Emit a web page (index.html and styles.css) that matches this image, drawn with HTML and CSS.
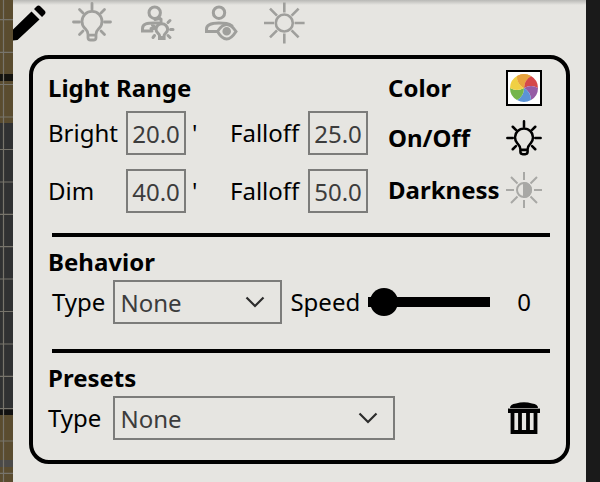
FILE: index.html
```html
<!DOCTYPE html>
<html lang="en">
<head>
    <meta charset="UTF-8">
    <meta name="viewport" content="width=device-width, initial-scale=1.0">
    <title>Light Settings</title>
    <link rel="stylesheet" href="styles.css">
</head>
<body>

    <!-- Shared icons -->
    <svg width="0" height="0" class="sprite" aria-hidden="true">
        <symbol id="icon-bulb" viewBox="0 0 40 40">
            <g fill="none" stroke="currentColor" stroke-width="2.8" stroke-linecap="round">
                <path d="M16 32.500c0-3.600-1.200-4.200-3.200-6.200a10 10 0 1 1 14.400 0c-2 2-3.200 2.600-3.200 6.200v2.900q0 2.600-2.600 2.600h-2.800q-2.600 0-2.600-2.600zM16 33.200h8"/>
                <path d="M20 1.500v6M1.500 20h6M32.500 20h6M7.500 7.500l3.500 3.500M32.500 7.500L29 11M7.500 32.500L11 29M32.500 32.500L29 29"/>
            </g>
        </symbol>
        <symbol id="icon-chevron" viewBox="0 0 20 12">
            <path d="M1.500 1.500L10 10l8.500-8.500" fill="none" stroke="currentColor" stroke-width="2.200"/>
        </symbol>
    </svg>

    <div class="screen">
        <svg class="map" viewBox="0 0 13 482" preserveAspectRatio="none" aria-hidden="true">
            <rect width="13" height="482" fill="#5a4c2f"/>
            <rect y="74" width="13" height="7" fill="#14130f"/>
            <rect y="123" width="13" height="286" fill="#303132"/>
            <rect y="409" width="13" height="6" fill="#111"/>
            <rect y="460" width="13" height="7" fill="#4b4a48"/>
            <path d="M3.500 0v482M0 19.700h13M0 52.300h13M0 84.500h13M0 117h13M0 149.500h13M0 182h13M0 214.300h13M0 246.700h13M0 279h13M0 311.500h13M0 344h13M0 376.300h13M0 408.700h13M0 441h13M0 473.300h13" stroke="#77746b" stroke-width="1.200" fill="none"/>
        </svg>

        <main class="panel">
            <nav class="toolbar">
                <button class="tool active" aria-label="Edit">
                    <svg viewBox="0 0 40 40">
                        <path d="M1 31.500L23.500 9.500l8 8L9.500 38l-5 .5-4-3z M26 7l2.500-2.500q2-2 4 0l4 4q2 2 0 4L34 15z" fill="currentColor"/>
                    </svg>
                </button>
                <button class="tool" aria-label="Light">
                    <svg><use href="#icon-bulb"/></svg>
                </button>
                <button class="tool" aria-label="Token light">
                    <svg viewBox="0 0 40 40" fill="none" stroke="currentColor" stroke-width="3" stroke-linecap="round">
                        <circle cx="18.700" cy="10.700" r="5.700"/>
                        <path d="M16 29H6.500v-2.500c0-5 5-5.500 12-5.500h4M15 26.500h3M18.500 24.500l-2-1M25 17v3M19 17.500l5-1"/>
                        <path d="M23.500 33.500c0-2-3.500-2.500-3.500-6a5.800 5.800 0 0 1 11.600 0c0 3.500-3.500 4-3.500 6v3h-4.600z"/>
                        <path d="M34.500 27.500h2.500M32 20.500l2-2M32 33.500l2 2M18.500 33.500l-1.500 2"/>
                        <path d="M24 34h4v3h-4z" fill="currentColor" stroke="none"/>
                    </svg>
                </button>
                <button class="tool" aria-label="Token vision">
                    <svg viewBox="0 0 40 40" fill="none" stroke="currentColor" stroke-width="3" stroke-linecap="round">
                        <circle cx="19" cy="10.700" r="5.700"/>
                        <path d="M17 29.500H6.500v-2.500c0-5 5-6 12.500-6 6 0 9.500 0 13 3"/>
                        <path d="M17.500 29.500q9-14 18.500 0q-9.500 15-18.500 0z"/>
                        <circle cx="26.700" cy="29.300" r="2.800" fill="currentColor"/>
                    </svg>
                </button>
                <button class="tool" aria-label="Daylight">
                    <svg viewBox="0 0 40 40" fill="none" stroke="currentColor" stroke-width="2.600">
                        <circle cx="20.300" cy="21" r="8.500"/>
                        <path d="M20.300 0.500v10M20.300 31.500v10M0 21h10M30.600 21h10M6 6.700l7 7M34.600 6.700l-7 7M6 35.300l7-7M34.600 35.300l-7-7"/>
                    </svg>
                </button>
            </nav>

            <div class="card">
                <section class="light">
                    <div class="ranges">
                        <h2>Light Range</h2>
                        <div class="range-row">
                            <label for="bright">Bright</label>
                            <input type="text" id="bright" value="20.0">
                            <span class="unit">'</span>
                            <label for="bright-falloff">Falloff</label>
                            <input type="text" id="bright-falloff" value="25.0">
                        </div>
                        <div class="range-row">
                            <label for="dim">Dim</label>
                            <input type="text" id="dim" value="40.0">
                            <span class="unit">'</span>
                            <label for="dim-falloff">Falloff</label>
                            <input type="text" id="dim-falloff" value="50.0">
                        </div>
                    </div>

                    <div class="options">
                        <h2>Color</h2>
                        <button class="color-button" aria-label="Color">
                            <svg viewBox="2 2 32 32">
                                <path d="M18 18A14 14 0 0 1 11 5.900A14 14 0 0 1 25 5.900A14 14 0 0 0 18 18z" fill="#e8a33d"/>
                                <path d="M18 18A14 14 0 0 1 25 5.900A14 14 0 0 1 32 18A14 14 0 0 0 18 18z" fill="#d5484a"/>
                                <path d="M18 18A14 14 0 0 1 32 18A14 14 0 0 1 25 30.100A14 14 0 0 0 18 18z" fill="#955ba5"/>
                                <path d="M18 18A14 14 0 0 1 25 30.100A14 14 0 0 1 11 30.100A14 14 0 0 0 18 18z" fill="#5b93d6"/>
                                <path d="M18 18A14 14 0 0 1 11 30.100A14 14 0 0 1 4 18A14 14 0 0 0 18 18z" fill="#74b54a"/>
                                <path d="M18 18A14 14 0 0 1 4 18A14 14 0 0 1 11 5.900A14 14 0 0 0 18 18z" fill="#f0d044"/>
                                <path d="M18 18A14 14 0 0 1 11 5.900A14 14 0 0 1 25 5.900A14 14 0 0 0 18 18z" fill="#e8a33d"/>
                            </svg>
                        </button>
                        <h2>On/Off</h2>
                        <button class="icon-button" aria-label="On/Off">
                            <svg><use href="#icon-bulb"/></svg>
                        </button>
                        <h2>Darkness</h2>
                        <button class="icon-button off" aria-label="Darkness">
                            <svg viewBox="0 0 36 36" fill="none" stroke="currentColor" stroke-width="2">
                                <circle cx="18" cy="18" r="7"/>
                                <path d="M18 11a7 7 0 0 1 0 14z" fill="currentColor"/>
                                <path d="M18 0v8M18 28v8M0 18h8M28 18h8M5 5l6.500 6.500M31 5l-6.500 6.500M5 31l6.500-6.500M31 31l-6.500-6.500"/>
                            </svg>
                        </button>
                    </div>
                </section>

                <hr>

                <section>
                    <h2>Behavior</h2>
                    <div class="row behavior-row">
                        <label for="behavior">Type</label>
                        <div class="select behavior-select">
                            <select id="behavior">
                                <option>None</option>
                            </select>
                            <svg><use href="#icon-chevron"/></svg>
                        </div>
                        <label for="speed">Speed</label>
                        <input type="range" id="speed" min="0" max="10" value="0">
                        <output for="speed" id="speed-value">0</output>
                    </div>
                </section>

                <hr>

                <section>
                    <h2>Presets</h2>
                    <div class="row preset-row">
                        <label for="preset">Type</label>
                        <div class="select preset-select">
                            <select id="preset">
                                <option>None</option>
                            </select>
                            <svg><use href="#icon-chevron"/></svg>
                        </div>
                        <button class="icon-button delete" aria-label="Delete preset">
                            <svg viewBox="0 0 36 36">
                                <path d="M4 8q0-4 6-4.500Q18 1 26 3.500q6 .5 6 4.500z" fill="currentColor"/>
                                <path d="M2 8.600h32v4.400H2z" fill="currentColor"/>
                                <path d="M6.500 12v20h23V12M14 12v20M22 12v20" fill="none" stroke="currentColor" stroke-width="3.800"/>
                            </svg>
                        </button>
                    </div>
                </section>
            </div>
        </main>
    </div>

    <script>
        // Show the speed next to the slider
        document.getElementById("speed").addEventListener("input", function () {
            document.getElementById("speed-value").value = this.value;
        });
    </script>

</body>
</html>
```
FILE: styles.css
```css
* {
    box-sizing: border-box;
}
body {
    margin: 0;
    font-family: "Noto Sans", sans-serif;
    font-size: 24px;
    line-height: 34px;
    color: #000;
    background: #1a1a1a;
}
.sprite {
    position: absolute;
}
.screen {
    display: grid;
    grid-template-columns: 13px 1fr;
    min-height: 100vh;
    padding-right: 14px;
}
.map {
    width: 100%;
    height: 100%;
}
.panel {
    overflow: hidden;
    padding: 0 16px 16px;
    background: linear-gradient(#b8b8b5, #e6e5e1 5px);
}

/* Toolbar */
.toolbar {
    display: flex;
    gap: 24px;
    height: 55px;
    margin-left: -21px;
    padding-top: 2px;
}
button {
    padding: 0;
    border: none;
    background: none;
    color: #000;
    cursor: pointer;
}
button svg {
    display: block;
    width: 100%;
    height: 100%;
    overflow: visible;
}
.tool {
    width: 40px;
    height: 40px;
    color: #9f9f9c;
}
.tool.active {
    color: #000;
}

/* Settings card */
.card {
    padding: 12px 16px 20px 15px;
    border: 4px solid #000;
    border-radius: 20px;
}
h2 {
    margin: 0;
    font-size: 24px;
    line-height: 34px;
}
hr {
    height: 4px;
    margin: 20px 0 8px 4px;
    border: none;
    background: #000;
}
.light {
    display: flex;
    gap: 20px;
}
.ranges h2 {
    margin-bottom: 6px;
}
.range-row {
    display: grid;
    grid-template-columns: 78px 60px 44px 78px 60px;
    align-items: center;
}
.range-row + .range-row {
    margin-top: 14px;
}
.unit {
    padding-left: 6px;
}
input[type="text"],
select {
    width: 100%;
    height: 44px;
    margin: 0;
    border: 2px solid #7c7c7a;
    border-radius: 0;
    background: #e6e5e1;
    color: #3c3c3c;
    font-family: inherit;
    font-size: 24px;
}
input[type="text"] {
    padding: 0;
    text-align: center;
}
.options {
    flex: 1;
    display: grid;
    grid-template-columns: 1fr 36px;
    grid-template-rows: 34px 38px 38px;
    row-gap: 14px;
    align-items: center;
    padding-right: 8px;
}
.color-button {
    width: 36px;
    height: 36px;
    border: 2px solid #000;
    background: #fff;
}
.icon-button {
    width: 36px;
    height: 36px;
}
.icon-button.off {
    color: #a8a8a5;
}

/* Behavior and presets */
.row {
    display: flex;
    align-items: center;
    padding-top: 1px;
}
.behavior-row {
    gap: 8px;
    padding-left: 4px;
    padding-bottom: 5px;
}
.preset-row {
    gap: 12px;
}
.select {
    position: relative;
}
.select svg {
    position: absolute;
    top: 16px;
    right: 17px;
    width: 20px;
    height: 12px;
    color: #2c2c2c;
    pointer-events: none;
}
select {
    appearance: none;
    padding: 0 5px;
}
.behavior-select {
    width: 169px;
}
.preset-select {
    width: 282px;
}
input[type="range"] {
    appearance: none;
    width: 122px;
    height: 28px;
    margin: 0;
    padding: 0 2px;
    background: linear-gradient(#000, #000) center / 100% 10px no-repeat;
}
input[type="range"]::-webkit-slider-thumb {
    appearance: none;
    width: 28px;
    height: 28px;
    border-radius: 50%;
    background: #000;
}
output {
    flex: 1;
    text-align: center;
}
.delete {
    margin-left: auto;
    margin-right: 8px;
}
```
